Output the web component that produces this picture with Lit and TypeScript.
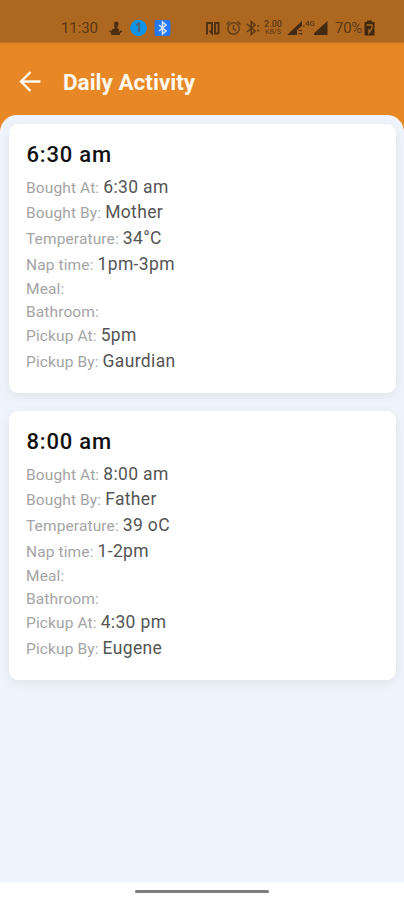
import { LitElement, html, css } from "lit";
import { customElement, property } from "lit/decorators.js";

type Row = [label: string, value: string];

@customElement("status-bar")
class StatusBar extends LitElement {
  static styles = css`
    :host { display: flex; align-items: center; height: 42px; padding: 13px 29px 0 61px; box-sizing: border-box; background: #ae671f; color: #5b3817; font: 15px/30px Roboto, sans-serif; box-shadow: 0 1px 1px #c77422; position: relative; }
    svg { display: block; flex: none; height: 20px; }
    .time { width: 47px; letter-spacing: -0.1px; }
    .gap { flex: 1; }
    .icons { display: flex; align-items: center; }
    .rate { display: flex; flex-direction: column; width: 20px; margin: 0 4px 0 2px; text-align: center; }
    .rate .num { font-size: 9px; line-height: 10px; font-weight: 500; }
    .rate .unit { font-size: 7px; line-height: 8px; margin-top: -1px; }
    .fourg { font-size: 8px; line-height: 8px; margin-bottom: 8px; width: 9px; letter-spacing: -.3px; font-weight: 500; }
    .pct { width: 29px; margin-left: 7px; letter-spacing: -0.3px; white-space: nowrap; }
    .badge { margin-right: 7px; }
  `;
  render() {
    return html`
      <span class="time">11:30</span>
      <svg class="badge" width="15" viewBox="0 0 15 20" fill="#4b2d12"><circle cx="8.300" cy="5.800" r="2.300"/><path d="M5.500 7.500h5l-1.500 2 2.300 2.300-1 3H4L3.300 12 7 10z"/><path d="M1.500 13.200 5 15.200h5l4-2.200M3 16.300h9" fill="none" stroke="#4b2d12" stroke-width="1.500"/></svg>
      <svg class="badge" width="17" viewBox="0 0 17 20"><circle cx="8.500" cy="10" r="8.300" fill="#0d94e8"/><path d="M6.300 7.300 9 5.700V14.200" fill="none" stroke="#4f6478" stroke-width="2.200"/></svg>
      <svg width="17" viewBox="0 0 17 20"><rect x=".5" y="2" width="16" height="16" rx="2" fill="#2478f3"/><path d="m5 7 7 6-3.500 3V4L12 7l-7 6" fill="none" stroke="#d5e5f7" stroke-width="1.600"/></svg>
      <span class="gap"></span>
      <div class="icons">
        <svg width="16" viewBox="0 0 16 20" fill="none" stroke="#4d3015" stroke-width="1.900"><path d="M2 4v12.500M3 5h4v10.500L4.500 12.500M13.500 4v12M13.500 15.500H10V5h3"/></svg>
        <svg width="22" viewBox="1 0 22 20" fill="none" stroke="#62401b" stroke-width="1.500"><circle cx="13.500" cy="10.500" r="5.700"/><path d="M13.500 7v4l2.500 1.500M6.500 6.500l3-3M17.500 3.500l3 3"/></svg>
        <svg width="18" viewBox="0 0 18 20" fill="none" stroke="#5b3917" stroke-width="1.600"><path d="m4 6 8 7-3.800 3.500v-13L12 7l-8 7M14 8h2.300M14 12.500h2.300"/></svg>
        <div class="rate"><span class="num">2.00</span><span class="unit">KB/S</span></div>
        <svg width="18" viewBox="0 0 18 20"><path d="M0 17 15 3v5l-5 4v5z" fill="#432a13"/><path d="M11.500 12.500h3.500M11.500 15.800h4M16 8h1.500" stroke="#5b3917" stroke-width="1.500"/></svg>
        <span class="fourg">4G</span>
        <svg width="14" viewBox="0 0 14 20"><path d="M-2 17 13.500 3v14z" fill="#432a13"/></svg>
        <span class="pct">70%</span>
        <svg width="11" viewBox="0 0 11 20"><path d="M3 2.500h5V4h2.500v13.500H.5V4H3z" fill="#402812"/><path d="M2.500 7h5.500v3L5 15V11" fill="none" stroke="#ab671f" stroke-width="1.300"/></svg>
      </div>`;
  }
}

@customElement("activity-card")
class ActivityCard extends LitElement {
  @property() heading = "";
  @property({ attribute: false }) rows: Row[] = [];
  static styles = css`
    :host { display: block; box-sizing: border-box; height: 269px; padding: 15px 17px; background: #fff; border-radius: 9px; box-shadow: 0 3px 8px #dfe4ea; font-family: Roboto, sans-serif; }
    .heading { margin: 0 0 3.6px .5px; font-size: 22px; line-height: 32px; font-weight: 500; letter-spacing: .8px; color: #111; }
    .row { display: flex; align-items: baseline; height: 25.9px; line-height: 25.9px; white-space: pre; }
    .row.empty { height: 22.6px; line-height: 22.6px; }
    .label { font-size: 15.5px; letter-spacing: .12px; color: #a4a4a4; }
    .value { margin-left: 4px; font-size: 17.500px; letter-spacing: .35px; color: #555; }
  `;
  render() {
    return html`<h2 class="heading">${this.heading}</h2>
      ${this.rows.map(([label, value]) => html`<div class="row ${value ? "" : "empty"}"><span class="label">${label}:</span>${value ? html`<span class="value">${value}</span>` : ""}</div>`)}`;
  }
}

@customElement("app-root")
class AppRoot extends LitElement {
  static styles = css`
    :host { display: flex; flex-direction: column; height: 900px; background: #e78725; font-family: Roboto, sans-serif; overflow: hidden; }
    .bar { display: flex; align-items: center; height: 73px; padding: 7px 0 0 18px; box-sizing: border-box; flex: none; }
    .bar svg { width: 24px; height: 24px; margin-right: 21px; }
    .title { color: #fff8ee; font-size: 22.5px; line-height: 32px; font-weight: 700; margin: 0; }
    .sheet { flex: 1; display: flex; flex-direction: column; gap: 18px; padding: 9px 8px 0 9px; background: #eff3fb; border-radius: 17px 17px 0 0; }
    .nav { height: 18px; flex: none; background: #fefefe; display: flex; justify-content: center; align-items: center; }
    .pill { width: 134px; height: 3px; border-radius: 2px; background: #7d7d7d; }
  `;
  render() {
    const first: Row[] = [["Bought At", "6:30 am"], ["Bought By", "Mother"], ["Temperature", "34°C"], ["Nap time", "1pm-3pm"], ["Meal", ""], ["Bathroom", ""], ["Pickup At", "5pm"], ["Pickup By", "Gaurdian"]];
    const second: Row[] = [["Bought At", "8:00 am"], ["Bought By", "Father"], ["Temperature", "39 oC"], ["Nap time", "1-2pm"], ["Meal", ""], ["Bathroom", ""], ["Pickup At", "4:30 pm"], ["Pickup By", "Eugene"]];
    return html`<status-bar></status-bar>
      <header class="bar">
        <svg viewBox="0 0 24 24" fill="none" stroke="#fff8ee" stroke-width="2.400"><path d="M22.500 11.500H3M12.500 2 3 11.500l9.500 9.500"/></svg>
        <h1 class="title">Daily Activity</h1>
      </header>
      <main class="sheet">
        <activity-card heading="6:30 am" .rows=${first}></activity-card>
        <activity-card heading="8:00 am" .rows=${second}></activity-card>
      </main>
      <footer class="nav"><div class="pill"></div></footer>`;
  }
}
